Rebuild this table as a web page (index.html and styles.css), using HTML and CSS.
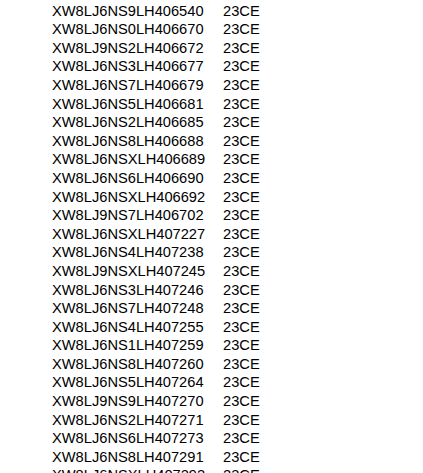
FILE: index.html
```html
<!DOCTYPE html>
<html lang="en">
<head>
  <meta charset="UTF-8">
  <title>VIN list</title>
  <link rel="stylesheet" href="styles.css">
</head>
<body>
  <div class="vin-list">
    <div class="row"><span class="vin">XW8LJ6NS9LH406540</span><span class="code">23CE</span></div>
    <div class="row"><span class="vin">XW8LJ6NS0LH406670</span><span class="code">23CE</span></div>
    <div class="row"><span class="vin">XW8LJ9NS2LH406672</span><span class="code">23CE</span></div>
    <div class="row"><span class="vin">XW8LJ6NS3LH406677</span><span class="code">23CE</span></div>
    <div class="row"><span class="vin">XW8LJ6NS7LH406679</span><span class="code">23CE</span></div>
    <div class="row"><span class="vin">XW8LJ6NS5LH406681</span><span class="code">23CE</span></div>
    <div class="row"><span class="vin">XW8LJ6NS2LH406685</span><span class="code">23CE</span></div>
    <div class="row"><span class="vin">XW8LJ6NS8LH406688</span><span class="code">23CE</span></div>
    <div class="row"><span class="vin">XW8LJ6NSXLH406689</span><span class="code">23CE</span></div>
    <div class="row"><span class="vin">XW8LJ6NS6LH406690</span><span class="code">23CE</span></div>
    <div class="row"><span class="vin">XW8LJ6NSXLH406692</span><span class="code">23CE</span></div>
    <div class="row"><span class="vin">XW8LJ9NS7LH406702</span><span class="code">23CE</span></div>
    <div class="row"><span class="vin">XW8LJ6NSXLH407227</span><span class="code">23CE</span></div>
    <div class="row"><span class="vin">XW8LJ6NS4LH407238</span><span class="code">23CE</span></div>
    <div class="row"><span class="vin">XW8LJ9NSXLH407245</span><span class="code">23CE</span></div>
    <div class="row"><span class="vin">XW8LJ6NS3LH407246</span><span class="code">23CE</span></div>
    <div class="row"><span class="vin">XW8LJ6NS7LH407248</span><span class="code">23CE</span></div>
    <div class="row"><span class="vin">XW8LJ6NS4LH407255</span><span class="code">23CE</span></div>
    <div class="row"><span class="vin">XW8LJ6NS1LH407259</span><span class="code">23CE</span></div>
    <div class="row"><span class="vin">XW8LJ6NS8LH407260</span><span class="code">23CE</span></div>
    <div class="row"><span class="vin">XW8LJ6NS5LH407264</span><span class="code">23CE</span></div>
    <div class="row"><span class="vin">XW8LJ9NS9LH407270</span><span class="code">23CE</span></div>
    <div class="row"><span class="vin">XW8LJ6NS2LH407271</span><span class="code">23CE</span></div>
    <div class="row"><span class="vin">XW8LJ6NS6LH407273</span><span class="code">23CE</span></div>
    <div class="row"><span class="vin">XW8LJ6NS8LH407291</span><span class="code">23CE</span></div>
    <div class="row"><span class="vin">XW8LJ6NSXLH407292</span><span class="code">23CE</span></div>
  </div>
</body>
</html>
```

FILE: styles.css
```css
html, body { margin: 0; background: #fff; }
body { height: 473px; overflow: hidden; }
.vin-list {
  padding: 1.6px 0 0 52px;
  font-family: "Liberation Sans", Arial, sans-serif;
  font-size: 14.67px;
  line-height: 18.6px;
  color: #000;
}
.row {
  display: grid;
  grid-template-columns: 171px auto;
}
```
